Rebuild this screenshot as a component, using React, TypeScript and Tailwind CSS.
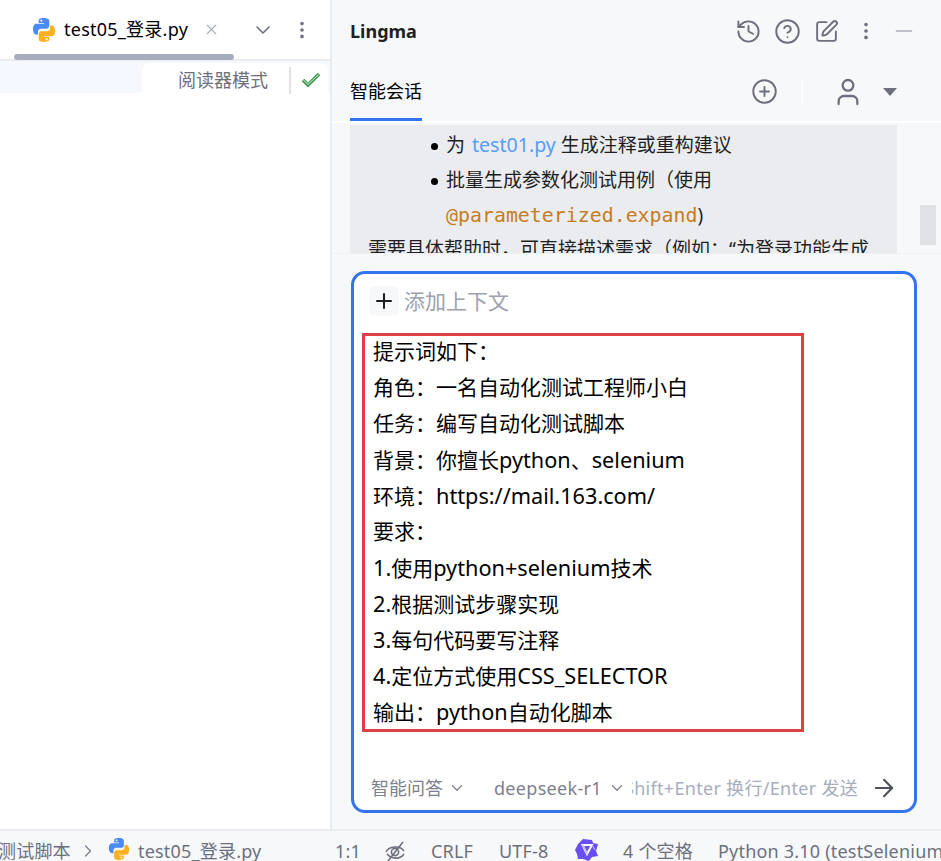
import React from 'react';
import { ArrowRight, ChevronDown, ChevronRight, CirclePlus, CircleHelp, EllipsisVertical, History, Minus, Plus, SquarePen, User, X } from 'lucide-react';

const FONT = "font-['Noto_Sans','Noto_Sans_CJK_SC',sans-serif]";

function PythonLogo({ size = 24 }: { size?: number }) {
  const half = 'M11.9 0C6.4 0 6.7 2.4 6.7 2.4v2.5h5.3v.8H4.6S1 5.3 1 11s3.1 5.5 3.1 5.5H6v-2.7s-.1-3.1 3.1-3.1h5.2s3 0 3-2.9V3s.5-3-5.4-3zM9 1.7a1 1 0 1 1 0 1.9 1 1 0 0 1 0-1.9z';
  return (
    <svg width={size} height={size} viewBox="0 0 24 24" className="shrink-0">
      <path d={half} fill="#4b8bf5" fillRule="evenodd" />
      <path d={half} fill="#ffb020" fillRule="evenodd" transform="rotate(180 12 12)" />
    </svg>
  );
}

function StarLogo() {
  return (
    <svg width="24" height="24" viewBox="0 0 24 24" className="shrink-0">
      <path d="M8 1l9 1 1 3 5 1-2 7 2 5-6 1-3 4-6-2-5 0-1-5-2-4 3-6z" fill="#6a4ff0" />
      <path d="M7.5 7h9.5l-5 9z" fill="none" stroke="#ffffff" strokeWidth="2" />
      <path d="M7.5 7l5 9M17 7l3 5" fill="none" stroke="#b9aaf9" strokeWidth="1.4" />
    </svg>
  );
}

function SlashedEye() {
  return (
    <svg width="22" height="22" viewBox="0 0 22 22" fill="none" stroke="#6c707e" strokeWidth="1.6" className="shrink-0">
      <path d="M2 12c3-6 14-7 18-1" />
      <path d="M3 14c4 5 13 6 17 0" />
      <circle cx="11" cy="12" r="3.6" />
      <path d="M19 2L4 21" />
    </svg>
  );
}

function ReaderCheck() {
  return (
    <svg width="20" height="16" viewBox="0 0 20 16" fill="none" className="shrink-0">
      <path d="M2 8l5 5 11-11" stroke="#3d9a50" strokeWidth="3.6" />
      <path d="M2.500 8l4.500 4.500L17.500 2.500" stroke="#d9efdc" strokeWidth="1" />
    </svg>
  );
}

const COLON = '\uFF1A';
const COMMA = '\uFF0C';
const PAREN = '\uFF08';

const PROMPT_LINES = [
  `提示词如下${COLON}`,
  `角色${COLON}一名自动化测试工程师小白`,
  `任务${COLON}编写自动化测试脚本`,
  `背景${COLON}你擅长python、selenium`,
  `环境${COLON}https://mail.163.com/`,
  `要求${COLON}`,
  '1.使用python+selenium技术',
  '2.根据测试步骤实现',
  '3.每句代码要写注释',
  '4.定位方式使用CSS_SELECTOR',
  `输出${COLON}python自动化脚本`,
];

// latin runs sit a little wider than the CJK ones in the reference
function PromptLine({ text }: { text: string }) {
  const parts = text.split(/([\x20-\x7e]+)/);
  return (
    <div className="h-[36px] text-[21px] leading-[31px] whitespace-nowrap text-black">
      {parts.map((part, i) => (i % 2 === 1 ? <span key={i} className="text-[21.7px]">{part}</span> : part))}
    </div>
  );
}

function EditorPane() {
  return (
    <div className="relative w-[332px] shrink-0 border-r-2 border-[#ebecf0] bg-white">
      <div className="flex h-[61px] items-center border-b-2 border-[#ebecf0]">
        <div className="ml-[32px] flex items-center">
          <PythonLogo />
          <span className="ml-[8px] w-[124px] text-[18px] tracking-[0.25px] whitespace-nowrap text-black">test05_登录.py</span>
          <X size={17} className="ml-[15px] text-[#a8adbd]" strokeWidth={1.6} />
        </div>
        <ChevronDown size={24} className="ml-[31px] text-[#6c707e]" strokeWidth={1.6} />
        <EllipsisVertical size={22} className="ml-[16px] text-[#6c707e]" strokeWidth={2} />
      </div>
      <div className="absolute left-[14px] top-[54px] h-[6px] w-[220px] rounded-full bg-[#a8adbd]" />
      <div className="flex h-[32px] bg-[#f5f8fe]">
        <div className="ml-[142px] mt-[2px] flex h-[30px] w-[186px] items-center rounded-t-lg bg-white pt-[4px]">
          <span className="ml-[36px] text-[18px] text-[#6c707e]">阅读器模式</span>
          <div className="ml-[21px] h-[27px] w-[2px] bg-[#dfe1e5]" />
          <div className="ml-[10px]"><ReaderCheck /></div>
        </div>
      </div>
    </div>
  );
}

function ChatHeader() {
  return (
    <>
      <div className="flex h-[62px] items-center pl-[18px] pr-[24px]">
        <span className="text-[18px] font-bold text-[#1e1f22]">Lingma</span>
        <div className="ml-auto flex items-center text-[#6c707e]">
          <History size={27} strokeWidth={1.7} />
          <CircleHelp size={27} strokeWidth={1.7} className="ml-[12px]" />
          <SquarePen size={25} strokeWidth={1.8} className="ml-[13px]" />
          <EllipsisVertical size={22} strokeWidth={2} className="ml-[16px]" />
          <Minus size={26} strokeWidth={1.4} className="ml-[14px] text-[#a8adbd]" />
        </div>
      </div>
      <div className="flex h-[61px] border-b-2 border-[#ffffff]">
        <div className="ml-[18px] flex h-full flex-col justify-end">
          <span className="mb-[15px] text-[18px] leading-[24px] text-black">智能会话</span>
          <div className="h-[3px] w-[72px] bg-[#3574f0]" />
        </div>
        <div className="ml-auto flex h-[30px] items-center self-center pr-[44px] text-[#6c707e]">
          <CirclePlus size={27} strokeWidth={1.7} />
          <div className="ml-[24px] h-[30px] w-[1px] bg-white" />
          <User size={32} strokeWidth={1.7} className="ml-[29px]" />
          <div className="ml-[19px] h-0 w-0 border-x-[7px] border-t-[8px] border-x-transparent border-t-[#6c707e]" />
        </div>
      </div>
    </>
  );
}

function MessageScroll() {
  return (
    <div className="relative h-[131px] shrink-0 overflow-hidden border-b border-[#eef0f4]">
      <div className="ml-[18px] mt-[2px] w-[547px] bg-[#ebecf0] pt-[2px]">
        <ul className="pl-[96px] text-[19px] leading-[36px] text-[#1e1f22]">
          <li className="relative h-[35px] whitespace-nowrap">
            <span className="absolute left-[-15px] top-[16px] h-[7px] w-[7px] rounded-full bg-black" />
            为 <span className="ml-[2px] text-[19.6px] text-[#589df6]">test01.py</span> 生成注释或重构建议
          </li>
          <li className="relative h-[35px] whitespace-nowrap">
            <span className="absolute left-[-15px] top-[16px] h-[7px] w-[7px] rounded-full bg-black" />
            批量生成参数化测试用例{PAREN}使用
          </li>
          <li className="h-[34px] whitespace-nowrap">
            <span className="font-['DejaVu_Sans_Mono',monospace] text-[19.9px] text-[#c77d1c]">@parameterized.expand</span>)
          </li>
        </ul>
        <p className="pl-[18px] text-[19px] leading-[36px] whitespace-nowrap text-[#1e1f22]">
          需要具体帮助时{COMMA}可直接描述需求{PAREN}例如{COLON}“为登录功能生成
        </p>
      </div>
      <div className="absolute right-[5px] top-[82px] h-[40px] w-[16px] bg-[#dfe1e5]" />
    </div>
  );
}

function PromptBox() {
  return (
    <div className="mx-[19px] mt-[17px] mr-[24px] flex h-[542px] flex-col rounded-[14px] border-[3px] border-[#3574f0] bg-white">
      <div className="mt-[12px] flex items-center pl-[15px]">
        <div className="flex h-[30px] w-[30px] items-center justify-center rounded-md bg-[#f7f8fa]">
          <Plus size={24} strokeWidth={2} className="text-[#1e1f22]" />
        </div>
        <span className="ml-[5px] text-[21px] leading-[30px] text-[#9da1ac]">添加上下文</span>
      </div>
      <div className="ml-[8px] mt-[17px] h-[399px] w-[442px] border-[3px] border-[#e04045] pl-[8px]">
        {PROMPT_LINES.map((line) => (
          <PromptLine key={line} text={line} />
        ))}
      </div>
      <div className="mt-auto mb-[7px] flex h-[30px] items-center pl-[17px] pr-[16px] text-[#7c8090]">
        <span className="text-[18px]">智能问答</span>
        <ChevronDown size={18} strokeWidth={1.6} className="ml-[5px]" />
        <span className="ml-[28px] w-[107px] text-[18px] tracking-[0.3px] whitespace-nowrap">deepseek-r1</span>
        <ChevronDown size={18} strokeWidth={1.6} className="ml-[7px]" />
        <div className="ml-[6px] flex w-[226px] justify-end overflow-hidden text-[18px] tracking-[0.3px] whitespace-nowrap text-[#a8adbd]">
          <span className="shrink-0">Shift+Enter 换行/Enter 发送</span>
        </div>
        <ArrowRight size={28} strokeWidth={1.8} className="ml-auto text-[#4e5157]" />
      </div>
    </div>
  );
}

function StatusBar() {
  return (
    <div className="flex h-[32px] shrink-0 items-start overflow-hidden border-t-2 border-[#ebecf0] bg-[#f7f8fa] pt-[10px] text-[18px] leading-[21px] tracking-[0.2px] whitespace-nowrap text-[#6c707e]">
      <span className="ml-[-2px] w-[74px] shrink-0">测试脚本</span>
      <ChevronRight size={20} strokeWidth={1.6} className="ml-[6px] shrink-0 text-[#7c8090]" />
      <div className="ml-[10px] mt-[-3px] shrink-0"><PythonLogo size={22} /></div>
      <span className="ml-[8px] w-[123px] shrink-0">test05_登录.py</span>
      <span className="ml-[74px] w-[23px] shrink-0">1:1</span>
      <div className="ml-[26px] mt-[-1px] shrink-0"><SlashedEye /></div>
      <span className="ml-[25px] w-[43px] shrink-0">CRLF</span>
      <span className="ml-[25px] w-[52px] shrink-0">UTF-8</span>
      <div className="ml-[24px] mt-[-3px] shrink-0"><StarLogo /></div>
      <span className="ml-[24px] w-[70px] shrink-0">4 个空格</span>
      <span className="ml-[25px] shrink-0">Python 3.10 (testSelenium</span>
    </div>
  );
}

export default function App() {
  return (
    <div className={`flex h-[861px] w-[941px] flex-col overflow-hidden bg-white ${FONT}`}>
      <div className="flex min-h-0 flex-1">
        <EditorPane />
        <div className="flex min-w-0 flex-1 flex-col bg-[#f7f8fa]">
          <ChatHeader />
          <MessageScroll />
          <PromptBox />
        </div>
      </div>
      <StatusBar />
    </div>
  );
}
